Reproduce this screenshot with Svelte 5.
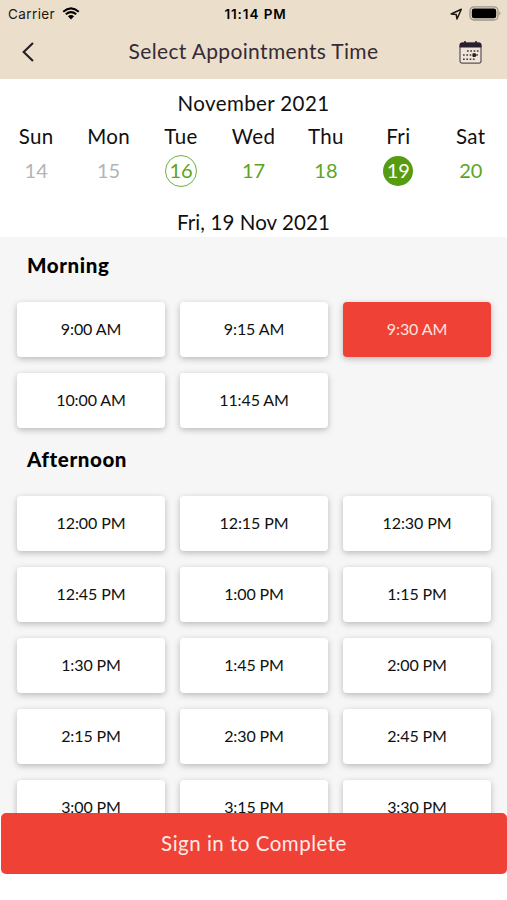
<script>
  let selectedDay = 19;
  let selectedTime = '9:30 AM';

  const days = [
    { name: 'Sun', date: 14, disabled: true },
    { name: 'Mon', date: 15, disabled: true },
    { name: 'Tue', date: 16, today: true },
    { name: 'Wed', date: 17 },
    { name: 'Thu', date: 18 },
    { name: 'Fri', date: 19 },
    { name: 'Sat', date: 20 },
  ];

  const sections = [
    {
      title: 'Morning',
      times: ['9:00 AM', '9:15 AM', '9:30 AM', '10:00 AM', '11:45 AM'],
    },
    {
      title: 'Afternoon',
      times: [
        '12:00 PM', '12:15 PM', '12:30 PM',
        '12:45 PM', '1:00 PM', '1:15 PM',
        '1:30 PM', '1:45 PM', '2:00 PM',
        '2:15 PM', '2:30 PM', '2:45 PM',
        '3:00 PM', '3:15 PM', '3:30 PM',
      ],
    },
  ];
</script>

<div class="screen">
  <header>
    <div class="status">
      <div class="carrier">
        <span>Carrier</span>
        <svg width="18" height="13" viewBox="0 0 18 13">
          <path d="M1.2 4.7 Q9 -2 16.8 4.7 M3.8 7.3 Q9 2.9 14.2 7.3" fill="none" stroke="#000" stroke-width="2" />
          <path d="M5.9 9.2 Q9 6.6 12.1 9.2 L9 12.4 Z" />
        </svg>
      </div>
      <span class="clock">11:14 PM</span>
      <div class="indicators">
        <svg width="13" height="12" viewBox="0 0 13 12">
          <path d="M1.2 6 L11.3 1.2 L7 11 L6.2 6.4 Z" fill="none" stroke="#1b1712" stroke-width="1.5" stroke-linejoin="round" />
        </svg>
        <svg width="33" height="15" viewBox="0 0 33 15">
          <rect x="1" y="0.8" width="28" height="13.2" rx="4" fill="none" stroke="#9b9788" stroke-width="1.3" />
          <rect x="2.8" y="2.6" width="24.4" height="9.6" rx="2.3" />
          <path d="M30.4 5.2 Q32.4 7.4 30.4 9.6 Z" fill="#8f8b7e" />
        </svg>
      </div>
    </div>
    <nav>
      <button class="icon-btn" aria-label="Back">
        <svg width="14" height="22" viewBox="0 0 14 22">
          <path d="M12 2 L2.7 11 L12 20" fill="none" stroke="#241c24" stroke-width="2.1" />
        </svg>
      </button>
      <h1>Select Appointments Time</h1>
      <button class="icon-btn right" aria-label="Calendar">
        <svg width="23" height="23" viewBox="0 0 23 23">
          <rect x="1" y="2.2" width="21" height="20" rx="2.2" fill="#f0e6d7" stroke="#5b525b" stroke-width="1.2" />
          <path d="M0.6 6.6 V4 Q0.6 1.6 3 1.6 H20 Q22.4 1.6 22.4 4 V6.6 Z" fill="#29202f" />
          <path d="M6 0 V3 M17 0 V3" stroke="#29202f" stroke-width="1.6" />
          <path d="M8 10 H20 M4 14 H20 M4 18.3 H16" stroke="#433943" stroke-width="1.5" stroke-dasharray="1.7 1.6" />
          <rect x="13.4" y="12.3" width="3.6" height="3.6" rx="0.8" fill="#29202f" />
        </svg>
      </button>
    </nav>
  </header>

  <section class="calendar">
    <div class="month">November 2021</div>
    <div class="week">
      {#each days as day}
        <div class="day">
          <span class="name">{day.name}</span>
          <span
            class="date"
            class:disabled={day.disabled}
            class:today={day.today}
            class:selected={day.date === selectedDay}>{day.date}</span>
        </div>
      {/each}
    </div>
    <div class="chosen">Fri, 19 Nov 2021</div>
  </section>

  <main>
    {#each sections as section}
      <h2>{section.title}</h2>
      <div class="slots">
        {#each section.times as time}
          <button
            class="slot"
            class:active={time === selectedTime}
            on:click={() => (selectedTime = time)}>{time}</button>
        {/each}
      </div>
    {/each}
  </main>

  <button class="submit">Sign in to Complete</button>
</div>

<style>
  :global(body) {
    margin: 0;
    background: #fff;
  }

  .screen {
    display: flex;
    flex-direction: column;
    width: 100%;
    height: 900px;
    overflow: hidden;
    background: #fff;
    color: #101010;
    font-family: Lato, "Open Sans", sans-serif;
  }

  button {
    border: 0;
    padding: 0;
    font-family: inherit;
  }

  header {
    flex: none;
    height: 79px;
    background: #ebdfcb;
  }

  .status {
    display: grid;
    grid-template-columns: 1fr auto 1fr;
    align-items: center;
    height: 27px;
    padding: 0 4px 0 8px;
    font-family: Inter, sans-serif;
    font-size: 13.5px;
    color: #1b1712;
  }

  .carrier,
  .indicators {
    display: flex;
    align-items: center;
  }

  .carrier {
    gap: 7px;
    letter-spacing: 0.4px;
  }

  .clock {
    font-size: 13.5px;
    font-weight: 600;
    letter-spacing: 0.9px;
    color: #000;
  }

  .indicators {
    justify-content: flex-end;
    gap: 6px;
    padding-right: 1px;
  }

  nav {
    display: grid;
    grid-template-columns: 1fr auto 1fr;
    align-items: center;
    height: 50px;
    padding: 0 25px 0 21px;
  }

  .icon-btn {
    display: flex;
    background: none;
  }

  .icon-btn.right {
    justify-self: end;
  }

  h1 {
    margin: -3px 0 0 4px;
    font-size: 21px;
    font-weight: 400;
    letter-spacing: 0.35px;
    color: #352b35;
  }

  .calendar {
    flex: none;
    height: 158px;
    text-align: center;
    font-size: 20.5px;
    letter-spacing: 0.4px;
  }

  .month {
    padding-top: 12px;
    line-height: 25px;
  }

  .week {
    display: grid;
    grid-template-columns: repeat(7, 1fr);
    padding-top: 6px;
  }

  .day {
    display: flex;
    flex-direction: column;
    align-items: center;
  }

  .name {
    line-height: 28px;
  }

  .date {
    box-sizing: border-box;
    width: 32px;
    height: 32px;
    margin-top: 5px;
    border: 1.5px solid transparent;
    border-radius: 50%;
    line-height: 29px;
    font-size: 20px;
    letter-spacing: 0;
    color: #5ba524;
  }

  .date.disabled {
    color: #b4b4b4;
  }

  .date.today {
    border-color: #6fb13c;
  }

  .date.selected {
    background: #569c12;
    background-clip: padding-box;
    color: #fff;
  }

  .chosen {
    padding-top: 23px;
    line-height: 25px;
    letter-spacing: 0.1px;
  }

  main {
    flex: none;
    height: 576px;
    overflow: hidden;
    background: #f6f6f6;
  }

  h2 {
    margin: 0;
    padding: 14px 27px 0;
    font-size: 20.5px;
    font-weight: 900;
    line-height: 28px;
    letter-spacing: 0.6px;
    color: #000;
  }

  .slots {
    display: grid;
    grid-template-columns: repeat(3, 1fr);
    gap: 16px 15px;
    padding: 23px 16px 3px 17px;
  }

  .slot {
    height: 55px;
    padding-bottom: 3px;
    border-radius: 4px;
    background: #fff;
    box-shadow: 0 2px 6px rgba(0, 0, 0, 0.25);
    font-size: 16px;
    letter-spacing: -0.1px;
    color: #101010;
  }

  .slot.active {
    background: #ef4136;
    color: #ffe3df;
  }

  .submit {
    flex: none;
    height: 61px;
    margin-left: 1px;
    padding-bottom: 2px;
    border-radius: 5px;
    background: #ef4136;
    font-size: 20.5px;
    letter-spacing: 0.5px;
    color: #ffeae7;
  }
</style>
